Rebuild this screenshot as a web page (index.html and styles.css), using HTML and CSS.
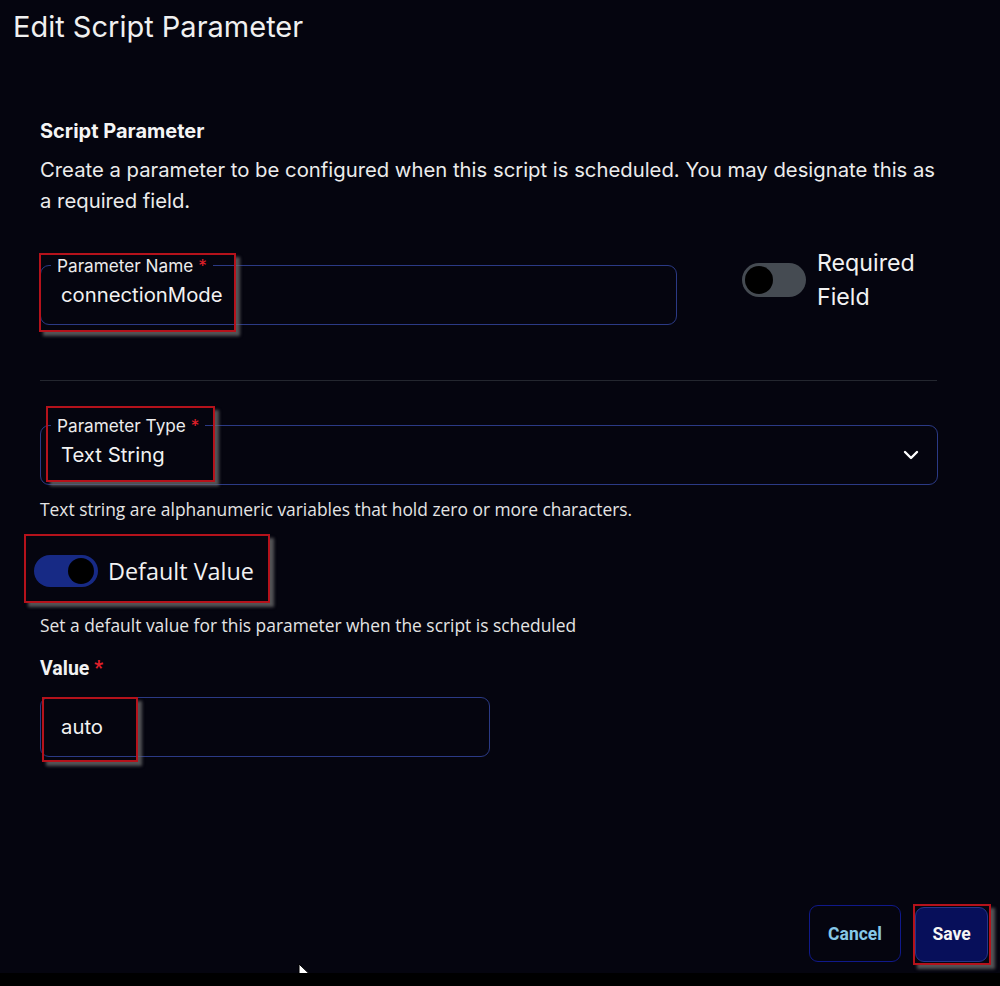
FILE: index.html
```html
<!DOCTYPE html>
<html>
<head>
<meta charset="utf-8">
<link rel="stylesheet" href="styles.css">
</head>
<body>
<div class="page">
  <h1 class="title">Edit Script Parameter</h1>
  <div class="content">
    <h2 class="section-title">Script Parameter</h2>
    <p class="desc">Create a parameter to be configured when this script is scheduled. You may designate this as a required field.</p>

    <div class="name-row">
      <div class="field name-field">
        <span class="legend">Parameter Name <span class="req">*</span></span>
        <span class="field-value">connectionMode</span>
        <span class="mark mark-name"></span>
      </div>
      <div class="req-toggle">
        <span class="switch off"><span class="knob"></span></span>
        <span class="req-label">Required<br>Field</span>
      </div>
    </div>

    <hr class="divider">

    <div class="field type-field">
      <span class="legend">Parameter Type <span class="req">*</span></span>
      <span class="field-value">Text String</span>
      <svg class="chevron" width="16" height="10" viewBox="0 0 16 10"><path d="M2 2 L8 8 L14 2" fill="none" stroke="#fff" stroke-width="2.4" stroke-linecap="round" stroke-linejoin="round"/></svg>
      <span class="mark mark-type"></span>
    </div>
    <p class="helper helper-type">Text string are alphanumeric variables that hold zero or more characters.</p>

    <div class="default-row">
      <span class="switch on"><span class="knob"></span></span>
      <span class="default-label">Default Value</span>
      <span class="mark mark-default"></span>
    </div>
    <p class="helper helper-default">Set a default value for this parameter when the script is scheduled</p>

    <div class="value-label">Value <span class="req">*</span></div>
    <div class="field value-field">
      <span class="field-value">auto</span>
      <span class="mark mark-value"></span>
    </div>
  </div>

  <div class="actions">
    <button class="btn cancel">Cancel</button>
    <button class="btn save">Save<span class="mark mark-save"></span></button>
  </div>
  <svg class="cursor" width="12" height="18" viewBox="0 0 12 18"><path d="M1 1 L1 15 L4.5 11.5 L7 17 L9 16 L6.6 10.6 L11 10.6 Z" fill="#fff" stroke="#000" stroke-width="1"/></svg>
  <div class="bottom-strip"></div>
</div>
</body>
</html>
```
FILE: styles.css
```css
html, body {
  margin: 0;
  padding: 0;
  background: #05050f;
}
body {
  width: 1000px;
  height: 986px;
  overflow: hidden;
  font-family: Inter, "Noto Sans", sans-serif;
  color: #f2f2f2;
}
.page {
  position: relative;
  width: 1000px;
  height: 986px;
  display: flex;
  flex-direction: column;
}
.title {
  margin: 0;
  padding: 10px 0 0 13px;
  font-size: 29px;
  font-weight: 400;
  line-height: 34px;
  color: #f0f0f0;
}
.content {
  padding: 75px 63px 0 40px;
  display: flex;
  flex-direction: column;
}
.section-title {
  margin: 0;
  font-size: 20px;
  font-weight: 650;
  line-height: 24px;
  color: #f5f5f5;
}
.desc {
  margin: 11px 0 0 0;
  font-size: 20.3px;
  line-height: 31px;
  color: #ececec;
}
.name-row {
  margin-top: 49px;
  display: flex;
  align-items: flex-start;
}
.field {
  position: relative;
  box-sizing: border-box;
  height: 60px;
  border: 1px solid #2b3a85;
  border-radius: 9px;
  display: flex;
  align-items: center;
}
.name-field {
  width: 637px;
}
.legend {
  position: absolute;
  left: 10px;
  top: -10px;
  padding: 0 6px;
  background: #05050f;
  font-size: 17.2px;
  line-height: 20px;
  color: #ececec;
}
.req {
  color: #e0202a;
}
.field-value {
  padding-left: 20px;
  font-size: 20.3px;
  line-height: 26px;
  color: #f2f2f2;
}
.req-toggle {
  margin-left: 65px;
  margin-top: -19px;
  display: flex;
  align-items: flex-start;
}
.switch {
  position: relative;
  box-sizing: border-box;
  width: 64px;
  height: 34px;
  border-radius: 17px;
  display: flex;
  align-items: center;
  padding: 0 3px;
  flex-shrink: 0;
}
.switch.off {
  background: #454b52;
  margin-top: 17px;
}
.switch.on {
  background: #172a85;
  justify-content: flex-end;
  height: 32px;
  padding: 0 4px;
}
.knob {
  width: 28px;
  height: 28px;
  border-radius: 50%;
  background: #000;
}
.switch.on .knob {
  width: 26px;
  height: 26px;
}
.req-label {
  margin-left: 11px;
  font-size: 23.2px;
  line-height: 34px;
  color: #f2f2f2;
}
.divider {
  margin: 55px 0 0 0;
  border: 0;
  height: 1px;
  background: #24272f;
  width: 897px;
}
.type-field {
  margin-top: 44px;
  width: 898px;
}
.chevron {
  position: absolute;
  right: 18px;
  top: 24px;
}
.helper {
  margin: 0;
  font-family: "Open Sans", "Noto Sans", sans-serif;
  font-size: 17.4px;
  line-height: 22px;
  color: #e4e4e4;
}
.helper-type {
  margin-top: 13px;
}
.default-row {
  position: relative;
  margin: 34px 0 0 -6px;
  display: flex;
  align-items: center;
  height: 34px;
}
.default-label {
  margin-left: 10px;
  font-family: "Open Sans", "Noto Sans", sans-serif;
  font-size: 23.4px;
  line-height: 30px;
  color: #f2f2f2;
}
.helper-default {
  margin-top: 26px;
}
.value-label {
  margin-top: 22px;
  font-family: Roboto, "Noto Sans", sans-serif;
  font-weight: 700;
  font-size: 19.5px;
  line-height: 22px;
  color: #f2f2f2;
}
.value-field {
  margin-top: 17px;
  width: 450px;
}
.mark {
  position: absolute;
  border: 2px solid #b5121b;
  box-shadow: 4px 4px 3px rgba(110, 110, 110, 0.75);
  pointer-events: none;
}
.mark-name {
  left: -2px;
  top: -13px;
  width: 193px;
  height: 75px;
}
.mark-type {
  left: 5px;
  top: -20px;
  width: 165px;
  height: 72px;
}
.mark-default {
  left: -10px;
  top: -20px;
  width: 242px;
  height: 65px;
}
.mark-value {
  left: 1px;
  top: -1px;
  width: 92px;
  height: 61px;
}
.mark-save {
  left: -3px;
  top: -4px;
  width: 74px;
  height: 57px;
}
.actions {
  margin-top: auto;
  margin-bottom: 24px;
  padding-right: 12px;
  display: flex;
  justify-content: flex-end;
  gap: 14px;
}
.btn {
  position: relative;
  box-sizing: border-box;
  height: 57px;
  border-radius: 9px;
  font-family: Roboto, "Noto Sans", sans-serif;
  font-weight: 700;
  font-size: 17.5px;
  cursor: pointer;
}
.cancel {
  width: 92px;
  background: transparent;
  border: 1px solid #10198a;
  color: #86c8e8;
}
.save {
  width: 73px;
  height: 55px;
  margin-top: 2px;
  padding-bottom: 3px;
  background: #070f5a;
  border: 1px solid #25348a;
  color: #f5f5f5;
}
.cursor {
  position: absolute;
  left: 298px;
  top: 963px;
}
.bottom-strip {
  position: absolute;
  left: 0;
  right: 0;
  bottom: 0;
  height: 13px;
  background: #000;
}
```
